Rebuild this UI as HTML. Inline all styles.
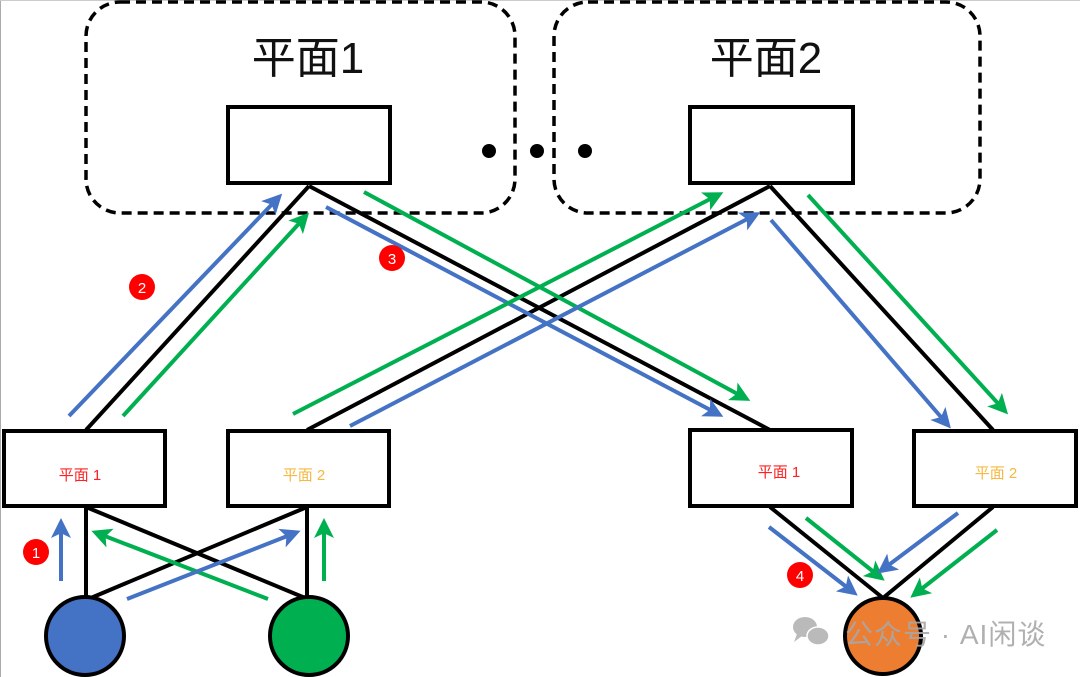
<!DOCTYPE html>
<html><head><meta charset="utf-8"><style>
html,body{margin:0;padding:0;background:#fff;}
svg{display:block;}
text{font-family:"Liberation Sans","Noto Sans CJK SC",sans-serif;}
</style></head><body>
<svg width="1080" height="677" viewBox="0 0 1080 677" xmlns="http://www.w3.org/2000/svg">
<defs>
<marker id="ab" markerWidth="5" markerHeight="5" refX="3.5" refY="2.5" orient="auto" markerUnits="strokeWidth"><path d="M0,0 L5,2.5 L0,5 L1.2,2.5 Z" fill="#4472C4"/></marker>
<marker id="ag" markerWidth="5" markerHeight="5" refX="3.5" refY="2.5" orient="auto" markerUnits="strokeWidth"><path d="M0,0 L5,2.5 L0,5 L1.2,2.5 Z" fill="#00B050"/></marker>
</defs>
<rect x="0" y="0" width="1080" height="677" fill="#fff"/>
<line x1="0.5" y1="0" x2="0.5" y2="677" stroke="#aaa" stroke-width="1"/>
<line x1="0" y1="0.5" x2="1080" y2="0.5" stroke="#ccc" stroke-width="1"/>
<rect x="86" y="2" width="429" height="211" rx="34" fill="none" stroke="#000" stroke-width="3.5" stroke-dasharray="10,6"/>
<rect x="554" y="2" width="426" height="211" rx="34" fill="none" stroke="#000" stroke-width="3.5" stroke-dasharray="10,6"/>
<text x="308" y="73" font-size="44" text-anchor="middle" fill="#111">平面1</text>
<text x="766" y="73" font-size="44" text-anchor="middle" fill="#111">平面2</text>
<circle cx="489" cy="151" r="7" fill="#000"/>
<circle cx="537" cy="151" r="7" fill="#000"/>
<circle cx="585" cy="151" r="7" fill="#000"/>
<g stroke="#000" stroke-width="4" fill="none">
<line x1="309" y1="186" x2="86" y2="430"/>
<line x1="309" y1="186" x2="770" y2="430"/>
<line x1="770" y1="186" x2="307" y2="430"/>
<line x1="770" y1="186" x2="993" y2="430"/>
<line x1="86" y1="507" x2="86" y2="600"/>
<line x1="86" y1="507" x2="310" y2="600"/>
<line x1="307" y1="507" x2="86" y2="600"/>
<line x1="307" y1="507" x2="307" y2="600"/>
<line x1="770" y1="507" x2="883" y2="598"/>
<line x1="993" y1="507" x2="883" y2="598"/>
</g>
<rect x="228" y="107" width="162" height="76" fill="#fff" stroke="#000" stroke-width="4"/>
<rect x="690" y="107" width="163" height="76" fill="#fff" stroke="#000" stroke-width="4"/>
<rect x="4" y="431" width="161" height="75" fill="#fff" stroke="#000" stroke-width="4"/>
<rect x="228" y="431" width="161" height="75" fill="#fff" stroke="#000" stroke-width="4"/>
<rect x="690" y="430" width="162" height="76" fill="#fff" stroke="#000" stroke-width="4"/>
<rect x="914" y="431" width="162" height="75" fill="#fff" stroke="#000" stroke-width="4"/>
<text x="80" y="480" font-size="15" text-anchor="middle" fill="#FF2020">平面 1</text>
<text x="304" y="480" font-size="15" text-anchor="middle" fill="#F5B840">平面 2</text>
<text x="779" y="477" font-size="15" text-anchor="middle" fill="#FF2020">平面 1</text>
<text x="996" y="478" font-size="15" text-anchor="middle" fill="#F5B840">平面 2</text>
<g stroke-width="4" fill="none">
<line x1="69" y1="416" x2="278" y2="198" stroke="#4472C4" marker-end="url(#ab)"/>
<line x1="123" y1="416" x2="305" y2="217" stroke="#00B050" marker-end="url(#ag)"/>
<line x1="326" y1="207" x2="718" y2="414" stroke="#4472C4" marker-end="url(#ab)"/>
<line x1="364" y1="192" x2="745" y2="398" stroke="#00B050" marker-end="url(#ag)"/>
<line x1="293" y1="414" x2="718" y2="195" stroke="#00B050" marker-end="url(#ag)"/>
<line x1="350" y1="426" x2="755" y2="215" stroke="#4472C4" marker-end="url(#ab)"/>
<line x1="771" y1="220" x2="947" y2="424" stroke="#4472C4" marker-end="url(#ab)"/>
<line x1="808" y1="195" x2="1004" y2="410" stroke="#00B050" marker-end="url(#ag)"/>
<line x1="61" y1="581" x2="61" y2="524" stroke="#4472C4" marker-end="url(#ab)"/>
<line x1="324" y1="581" x2="324" y2="524" stroke="#00B050" marker-end="url(#ag)"/>
<line x1="268" y1="599" x2="97" y2="533" stroke="#00B050" marker-end="url(#ag)"/>
<line x1="127" y1="599" x2="295" y2="533" stroke="#4472C4" marker-end="url(#ab)"/>
<line x1="769" y1="527" x2="853" y2="592" stroke="#4472C4" marker-end="url(#ab)"/>
<line x1="806" y1="518" x2="880" y2="577" stroke="#00B050" marker-end="url(#ag)"/>
<line x1="958" y1="513" x2="882" y2="570" stroke="#4472C4" marker-end="url(#ab)"/>
<line x1="997" y1="530" x2="915" y2="594" stroke="#00B050" marker-end="url(#ag)"/>
</g>
<circle cx="85" cy="636" r="39" fill="#4472C4" stroke="#000" stroke-width="4"/>
<circle cx="309" cy="636" r="39" fill="#00B050" stroke="#000" stroke-width="4"/>
<circle cx="883" cy="636" r="38" fill="#ED7D31" stroke="#000" stroke-width="4"/>
<g font-size="15" text-anchor="middle" fill="#fff">
<circle cx="36" cy="552" r="13" fill="#F00"/><text x="36" y="558">1</text>
<circle cx="142" cy="287" r="13" fill="#F00"/><text x="142" y="293">2</text>
<circle cx="392" cy="258" r="13" fill="#F00"/><text x="392" y="264">3</text>
<circle cx="800" cy="575" r="13" fill="#F00"/><text x="800" y="581">4</text>
</g>
<g opacity="0.8" fill="#aaa">
<ellipse cx="805" cy="627" rx="12" ry="10"/>
<ellipse cx="818" cy="636" rx="11" ry="9" stroke="#fff" stroke-width="1.5"/>
<path d="M797,634 L794,642 L802,636 Z"/>
</g>
<text x="845" y="644" font-size="28" fill="#a8a8a8" letter-spacing="1" opacity="0.9">公众号 · AI闲谈</text>
</svg>
</body></html>
